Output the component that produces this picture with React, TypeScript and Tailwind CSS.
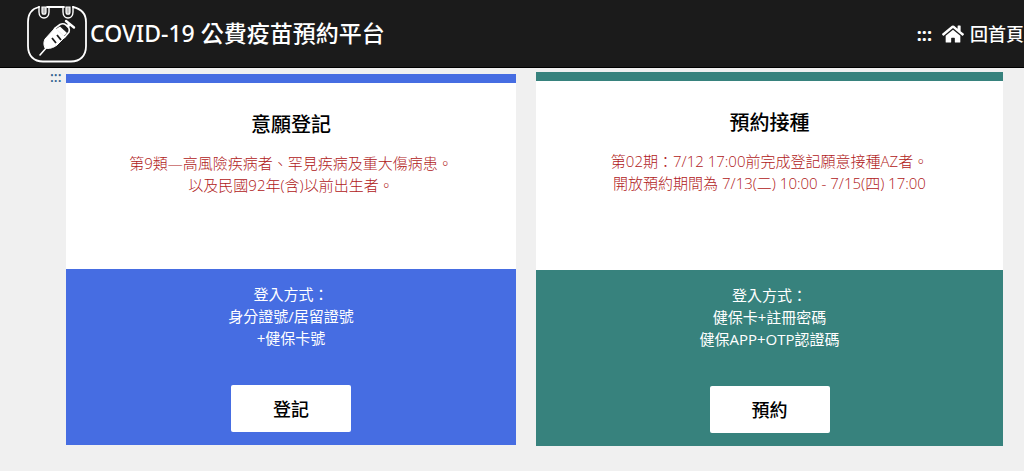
import { FaHome } from "react-icons/fa";

type BookingCardProps = {
  title: string;
  notes: string[];
  methods: string[];
  action: string;
  accent: string;
  className?: string;
};

const cards: BookingCardProps[] = [
  {
    title: "意願登記",
    notes: ["第9類—高風險疾病者、罕見疾病及重大傷病患。", "以及民國92年(含)以前出生者。"],
    methods: ["登入方式：", "身分證號/居留證號", "+健保卡號"],
    action: "登記",
    accent: "bg-[#466de2]",
    className: "mt-0.5 mb-px",
  },
  {
    title: "預約接種",
    notes: ["第02期：7/12 17:00前完成登記願意接種AZ者。", "開放預約期間為 7/13(二) 10:00 - 7/15(四) 17:00"],
    methods: ["登入方式：", "健保卡+註冊密碼", "健保APP+OTP認證碼"],
    action: "預約",
    accent: "bg-[#37827d]",
  },
];

const Logo = () => (
  <svg viewBox="0 0 60 58" className="h-[58px] w-[60px]" fill="none" stroke="white" aria-hidden="true">
    <path
      d="M20 2H37M46 2C55 4 59 9 59 17V41C59 51 53 56.500 44 56.500H16C7 56.500 1 51 1 41V17C1 9 4 4 12 2"
      strokeWidth="1.8"
      strokeLinecap="round"
    />
    {/* Calendar rings */}
    <path d="M12 1V7C12 15 22 15 22 7V1M36 1V7C36 15 46 15 46 7V1" strokeWidth="1.4" />
    <path d="M15 2V7C15 10 19 10 19 7V2ZM39 2V7C39 10 43 10 43 7V2Z" fill="white" fillOpacity="0.7" strokeWidth="1.2" />
    {/* Syringe */}
    <path d="M13 50L20 42" strokeWidth="1.6" strokeLinecap="round" />
    <path d="M18 43C16.500 40 16.500 37 18 34L28 23L38 32L30 40C26 43 22 44 18 43Z" fill="white" strokeWidth="1" />
    <path d="M27 24L33 19.500C35 18.500 37 18.500 39 20C42 22 43 24 42 27L37 33" strokeWidth="1.6" />
    <path d="M29 24L33 21.500L40 28L37 31Z" fill="white" stroke="none" />
    <path d="M40 22L43 19" strokeWidth="3" />
    <path d="M39 16L47 22.500" strokeWidth="2.4" strokeLinecap="round" />
    <path d="M25 33L29 38M30 30L34 35" stroke="#1b1b1b" strokeWidth="1.8" />
  </svg>
);

const BookingCard = ({ title, notes, methods, action, accent, className = "" }: BookingCardProps) => (
  <section className={`flex flex-col text-center ${className}`}>
    <div className={`h-[9px] ${accent}`} />
    <div className="min-h-[186px] flex-1 bg-white pt-7">
      <h2 className="text-xl leading-7 font-medium text-black">{title}</h2>
      <div className="mt-[13px] text-[15px] leading-[22px] font-light text-[#b02020]">
        {notes.map((note) => (
          <p key={note}>{note}</p>
        ))}
      </div>
    </div>
    <div className={`flex flex-col items-center pt-3.5 pb-[13px] text-[15px] leading-[22px] text-white ${accent}`}>
      {methods.map((method) => (
        <p key={method}>{method}</p>
      ))}
      <button
        type="button"
        className="mt-9 h-[47px] w-[120px] rounded-xs bg-white text-lg font-medium text-black"
      >
        {action}
      </button>
    </div>
  </section>
);

const App = () => {
  return (
    <div className="min-h-screen bg-[#f0f0f0] font-['Open_Sans','Noto_Sans_CJK_TC',sans-serif]">
      <header className="flex h-[68px] items-center justify-between overflow-hidden border-b border-black bg-[#1b1b1b] pl-[27px] font-['Noto_Sans','Noto_Sans_CJK_TC',sans-serif] whitespace-nowrap text-white">
        <h1>
          <a href="#" className="flex items-center gap-[3px] text-[23px] font-medium">
            <Logo />
            COVID-19 公費疫苗預約平台
          </a>
        </h1>
        <nav className="flex items-center gap-2.5 text-lg font-medium">
          <a href="#nav" className="font-bold">:::</a>
          <a href="#" className="flex items-center gap-1.5">
            <FaHome className="size-[22px]" />
            回首頁
          </a>
        </nav>
      </header>

      <main className="flex pt-1 pr-[21px] pl-[50px]">
        <a href="#main" className="w-4 shrink-0 text-sm leading-2.5 font-semibold text-[#2f5f8f]">
          :::
        </a>
        <div className="grid flex-1 grid-cols-[450fr_467fr] gap-5">
          {cards.map((card) => (
            <BookingCard key={card.title} {...card} />
          ))}
        </div>
      </main>
    </div>
  );
};

export default App;
